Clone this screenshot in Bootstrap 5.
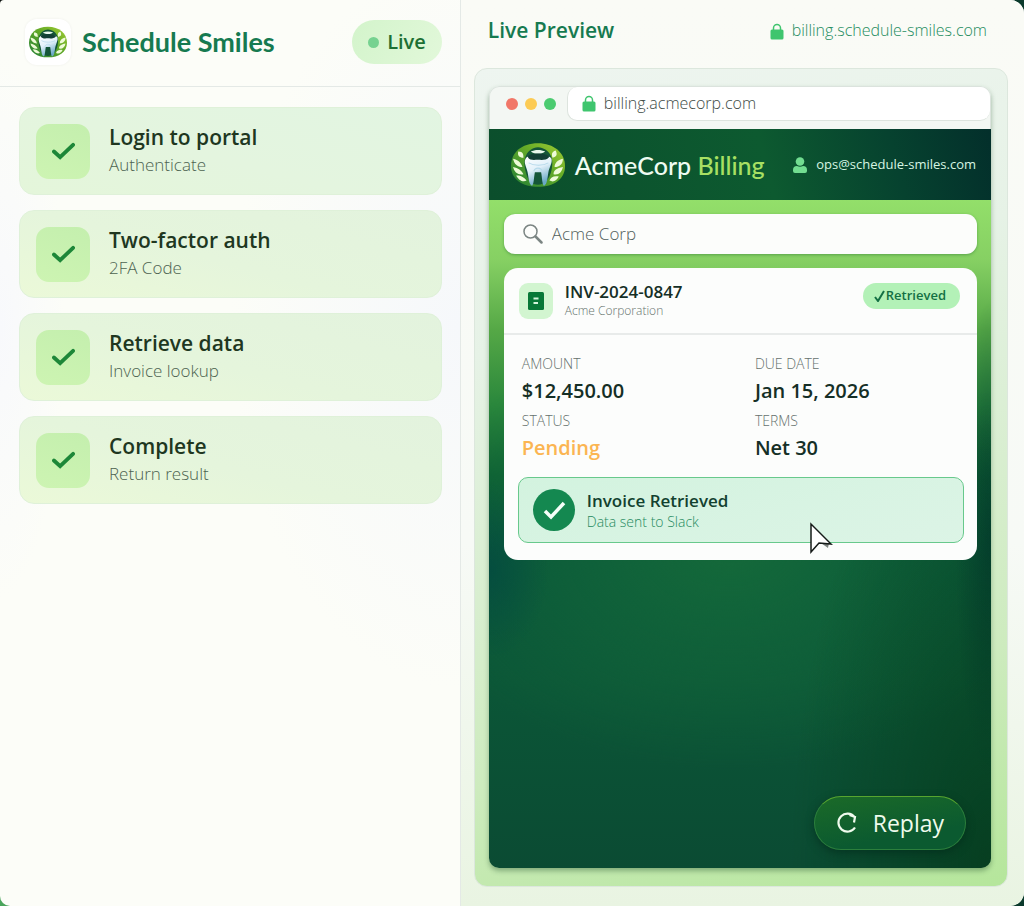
<!DOCTYPE html>
<html lang="en">
<head>
<meta charset="utf-8">
<meta name="viewport" content="width=device-width, initial-scale=1">
<title>Schedule Smiles</title>
<link href="https://cdn.jsdelivr.net/npm/bootstrap@5.3.0/dist/css/bootstrap.min.css" rel="stylesheet">
<style>
  :root { --brand: #167a50; --ink: #152f26; --line: #e4e9e6; }
  body { font-family: "Open Sans", sans-serif; color: var(--ink); line-height: 1.2;
    background: linear-gradient(90deg, #4aa55c, #0b3a2c 60%) bottom / 100% 50% no-repeat, linear-gradient(90deg, #0a0f0d, #0b3a2c) top / 100% 50% no-repeat; }
  svg { display: block; flex: none; }
  a { text-decoration: none; }
  .shell { border-radius: 4px 14px 14px 10px; overflow: hidden; background: #fcfdf8; }
  .side-pane { width: 45%; border-right: 1px solid var(--line);
    background: radial-gradient(ellipse 50% 40% at 100% 36%, #f6f8fb, #f6f8fb00), radial-gradient(ellipse 14% 30% at 0 36%, #f8f9fc, #f8f9fc00); }
  .side-head { height: 87px; border-bottom: 1px solid var(--line); padding: 0 18px 2px 25px; }
  .logo-tile { width: 46px; height: 46px; border-radius: 12px; background: #fff; box-shadow: 0 0 3px #0000000f; display: grid; place-items: center; }
  .brand-name { font-family: Lato, sans-serif; font-size: 27px; font-weight: 700; color: var(--brand); margin: 0 0 0 11px; }
  .live-pill { height: 44px; padding: 0 16px; gap: 8px; border-radius: 22px; font-size: 20px; font-weight: 600; color: #1d7034; background: linear-gradient(120deg, #d3f4cb, #e2f8da); }
  .live-dot { width: 11px; height: 11px; border-radius: 50%; background: #76d290; }
  .steps { padding: 20px 18px 20px 19px; display: grid; gap: 15px; margin: 0; }
  .step { min-height: 88px; padding: 0 16px; gap: 19px; border-radius: 15px; border: 1px solid #dff1d9; background: linear-gradient(15deg, #ebf9d8, #e5f5dc 45%, #e3f3de); }
  .step:first-child { background: linear-gradient(15deg, #e4f6da, #e4f5df 45%, #e2f5e2); }
  .tick { width: 54px; height: 55px; border-radius: 13px; display: grid; place-items: center; background: linear-gradient(200deg, #c4efae, #cdf4b2); }
  .step h2 { font-size: 21px; line-height: 24px; font-weight: 600; color: #20371f; margin: 0 0 4px; }
  .step p { font-size: 17px; line-height: 24px; font-weight: 300; color: #4c6350; margin: 0; }
  .main-pane { background: linear-gradient(#fafbf6, #f7faf6 60%, #e9f4e2); padding: 0 16px 19px 13px; }
  .pane-head { height: 68px; padding: 0 21px 6px 14px; }
  .pane-head h2 { font-size: 21px; font-weight: 600; color: var(--brand); margin: 0; }
  .site-link { gap: 8px; font-size: 16px; font-weight: 300; color: #248c60; }
  .stage { border: 1px solid #dce7dd; border-radius: 13px; padding: 17px 16px 18px 14px; background: linear-gradient(165deg, #eef5f0, #e6f2e6 30%, #cdebbe 75%, #b5e69b); }
  .browser { border-radius: 10px; overflow: hidden; box-shadow: 0 3px 5px #25552d66; }
  .tab-strip { height: 43px; padding-left: 16px; background: #f3f7f3; border: 1px solid #dbe3dd; border-bottom: 0; border-radius: 10px 10px 0 0; }
  .lamps { gap: 7px; padding-bottom: 9px; }
  .lamp { width: 12px; height: 12px; border-radius: 50%; }
  .address { height: 34px; gap: 8px; padding-left: 14px; margin-left: 11px; border: 1px solid #dde4de; border-width: 0 0 1px 1px; border-radius: 10px; background: #fff; }
  .bare { border: 0; outline: 0; background: transparent; padding: 0; width: 100%; min-width: 0; }
  .address .bare { font-size: 16px; font-weight: 300; color: #3e4b46; }
  .app-head { height: 71px; padding: 0 15px 0 22px; background: linear-gradient(75deg, #0b4e2c, #0d5a30 55%, #06422f 80%, #032f2b); }
  .app-name { font-family: Lato, sans-serif; font-size: 25px; font-weight: 500; color: #effcf2; margin-left: 10px; white-space: nowrap; }
  .app-name b { font-weight: inherit; color: #a8e063; }
  .ops { gap: 9px; font-size: 13px; color: #d6f5e2; }
  .app-body { padding: 14px 14px 18px 15px; gap: 14px;
    background: radial-gradient(ellipse 40% 480px at 100% 100%, #03361499, #03361400),
      radial-gradient(ellipse 36px 240px at 100% 340px, #033a2fcc, #033a2f00),
      radial-gradient(ellipse 60px 90px at 0 370px, #034a40cc, #034a4000),
      radial-gradient(ellipse 65% 220px at 48% 350px, #14693a, #14693a00),
      linear-gradient(#93df6a, #86d063 60px, #55a846 130px, #2a873c 205px, #0e6234 275px, #08553a 350px, #0b5637 480px, #0b4b33 668px); }
  .finder { height: 40px; gap: 9px; padding: 0 19px; border-radius: 11px; background: #fcfdfb; box-shadow: 0 1px 3px #2f7a3488; }
  .finder .bare { font-size: 17px; font-weight: 300; color: #52605b; }
  .invoice { border-radius: 14px; background: #fcfdfc; }
  .invoice-head { height: 67px; padding: 0 17px 0 15px; border-bottom: 2px solid #e8ebea; gap: 12px; }
  .doc-tile { width: 34px; height: 36px; border-radius: 9px; background: #d2f5d0; display: grid; place-items: center; }
  .invoice h3 { font-size: 17px; line-height: 20px; font-weight: 600; margin: 0; }
  .invoice-head p { font-size: 12px; line-height: 18px; font-weight: 300; color: #66736e; margin: 0; }
  .state { height: 26px; padding: 0 14px 0 11px; border-radius: 13px; font-size: 13px; font-weight: 600; color: #147044; background: #b3f1b7; margin-bottom: 10px; }
  .facts { display: grid; grid-template-columns: 1fr 1fr; padding: 19px 0 0 18px; margin: 0; column-gap: 11px; }
  .facts dt { font-size: 14px; line-height: 20px; font-weight: 300; color: #65716d; }
  .facts dd { font-size: 20px; line-height: 33px; font-weight: 600; margin: 0 0 4px; }
  .facts .warn { color: #fbb552; }
  .notice { margin: 9px 13px 17px 14px; height: 66px; padding: 0 14px; gap: 12px; border: 1px solid #68c98c; border-radius: 10px; background: linear-gradient(165deg, #d3f3df, #dcf4e6); position: relative; }
  .notice h3 { line-height: 22px; color: #12412f; }
  .notice p { font-size: 14px; line-height: 19px; font-weight: 300; color: #258a60; margin: 0; }
  .cursor { position: absolute; right: 130px; top: 44px; }
  .replay { height: 54px; padding: 0 21px; gap: 15px; margin-right: 11px; border-radius: 27px; border: 1px solid #2c7f3c; border-top-color: #57a52f; font-size: 23px; color: #effbed; background: linear-gradient(170deg, #1b6a28, #0b5a30 70%); box-shadow: 0 3px 8px #02251888; }
</style>
</head>
<body>
<svg width="0" height="0" class="position-absolute" aria-hidden="true">
  <defs>
    <linearGradient id="leafFill" x1="0" y1="1" x2="1" y2="0"><stop stop-color="#217e35"/><stop offset=".6" stop-color="#67ac27"/><stop offset="1" stop-color="#a6cf35"/></linearGradient>
    <linearGradient id="toothFill" x1="0" y1="0" x2=".4" y2="1"><stop stop-color="#fff"/><stop offset=".5" stop-color="#e3f1fa"/><stop offset="1" stop-color="#6aa9c7"/></linearGradient>
    <symbol id="tooth" viewBox="0 0 52 44">
      <path d="M26 1C41 1 52 10 52 23S41 43 26 43 0 36 0 23 10 1 26 1Z" fill="url(#leafFill)"/>
      <path d="M26 5C15 6 11 16 14 28c2 9 6 13 12 13s11-5 13-14c3-12-2-21-13-22Z" fill="#145638"/>
      <path d="M7 9c5 0 5 3 5 6-4 0-6-2-5-6ZM2 16c5 1 8 4 9 8-5 0-8-3-9-8ZM2 24c5 1 8 3 10 7-5 1-9-2-10-7ZM5 32c5 0 8 2 10 5-4 2-8-1-10-5ZM43 8c-4 1-4 4-3 7 4-1 5-3 3-7ZM50 16c-5 1-8 4-8 8 5 0 8-3 8-8ZM50 24c-6 1-9 3-9 7 5 1 8-2 9-7ZM46 33c-5-1-8 1-9 4 4 2 7 0 9-4Z" fill="#eefbd8"/>
      <path d="M19 9c4-2 10-2 14 0-4 3-10 3-14 0Z" fill="#e9f8ed"/>
      <path d="M14 16c2-4 7-2 12-2s11-2 13 2c1 4-2 8-3 13-1 6-1 11-4 13-2 0-2-8-3-13h-6c-1 5-1 13-3 13-3-2-3-8-4-13-1-5-4-9-2-13Z" fill="url(#toothFill)"/>
      <path d="M16 14c3-4 17-4 21 0-3 4-8 3-11 3-4 0-8 1-10-3Z" fill="#123f35"/>
      <path d="M17 20c5 3 14 3 19 0M22 28c1-4 7-4 8 0" fill="none" stroke="#b5d9ea" stroke-width="1"/>
    </symbol>
    <symbol id="lock" viewBox="0 0 14 17"><path d="M3.500 8V5a3.500 3.500 0 0 1 7 0v3" fill="none" stroke="#3fc56e" stroke-width="1.500"/><rect x=".5" y="6.500" width="13" height="10" rx="1.500" fill="#3fc56e"/></symbol>
    <symbol id="check" viewBox="0 0 24 18"><path d="M2 9.500 8.500 15.500 22 2.500" fill="none" stroke="currentColor" stroke-width="4" stroke-linecap="round" stroke-linejoin="miter"/></symbol>
  </defs>
</svg>

<div class="shell d-flex min-vh-100">
  <aside class="side-pane flex-shrink-0">
    <header class="side-head d-flex align-items-center">
      <span class="logo-tile"><svg width="38" height="34"><use href="#tooth"/></svg></span>
      <h1 class="brand-name">Schedule Smiles</h1>
      <span class="live-pill d-flex align-items-center ms-auto"><span class="live-dot"></span>Live</span>
    </header>
    <ol class="steps list-unstyled">
      <li class="step d-flex align-items-center"><span class="tick"><svg width="23" height="18" color="#1d8738"><use href="#check"/></svg></span><div><h2>Login to portal</h2><p>Authenticate</p></div></li>
      <li class="step d-flex align-items-center"><span class="tick"><svg width="23" height="18" color="#1d8738"><use href="#check"/></svg></span><div><h2>Two-factor auth</h2><p>2FA Code</p></div></li>
      <li class="step d-flex align-items-center"><span class="tick"><svg width="23" height="18" color="#1d8738"><use href="#check"/></svg></span><div><h2>Retrieve data</h2><p>Invoice lookup</p></div></li>
      <li class="step d-flex align-items-center"><span class="tick"><svg width="23" height="18" color="#1d8738"><use href="#check"/></svg></span><div><h2>Complete</h2><p>Return result</p></div></li>
    </ol>
  </aside>

  <main class="main-pane d-flex flex-column flex-grow-1">
    <header class="pane-head d-flex align-items-center justify-content-between">
      <h2>Live Preview</h2>
      <a class="site-link d-flex align-items-center" href="#"><svg width="14" height="17"><use href="#lock"/></svg>billing.schedule-smiles.com</a>
    </header>
    <section class="stage d-flex flex-column flex-grow-1">
      <div class="browser d-flex flex-column flex-grow-1">
        <div class="tab-strip d-flex">
          <div class="lamps d-flex align-items-center flex-shrink-0">
            <span class="lamp" style="background:#f17768"></span><span class="lamp" style="background:#fccb54"></span><span class="lamp" style="background:#4bcb70"></span>
          </div>
          <label class="address d-flex align-items-center flex-grow-1"><svg width="14" height="17"><use href="#lock"/></svg><input class="bare" type="text" value="billing.acmecorp.com" aria-label="Address"></label>
        </div>
        <header class="app-head d-flex align-items-center">
          <svg width="54" height="46"><use href="#tooth"/></svg>
          <span class="app-name">AcmeCorp <b>Billing</b></span>
          <a class="ops d-flex align-items-center ms-auto" href="#"><svg width="14" height="16" viewBox="0 0 14 16" fill="#72dd91"><circle cx="7" cy="4.500" r="4.300"/><path d="M0 13q0-4 4-4 3 1.500 6 0 4 0 4 4v1q0 2-2 2H2q-2 0-2-2Z"/></svg>ops@schedule-smiles.com</a>
        </header>
        <div class="app-body d-flex flex-column flex-grow-1">
          <label class="finder d-flex align-items-center"><svg width="20" height="20" viewBox="0 0 20 20" fill="none" stroke="#7b8583"><circle cx="7.500" cy="7.500" r="6.500" stroke-width="1.500"/><path d="m12.500 12.500 6 6" stroke-width="2.500" stroke-linecap="round"/></svg><input class="bare" type="text" value="Acme Corp" aria-label="Search customers"></label>
          <article class="invoice">
            <header class="invoice-head d-flex align-items-center">
              <span class="doc-tile"><svg width="16" height="18" viewBox="0 0 16 18"><rect width="16" height="18" rx="1.500" fill="#087837"/><path d="M5.500 6.500h5M5.500 11h4.500" stroke="#d5f5dc" stroke-width="2"/></svg></span>
              <div><h3>INV-2024-0847</h3><p>Acme Corporation</p></div>
              <span class="state d-flex align-items-center ms-auto"><svg width="12" height="12" viewBox="0 0 12 12" fill="none" stroke="currentColor" stroke-width="2"><path d="m1 7 3 4L10 1"/></svg>Retrieved</span>
            </header>
            <dl class="facts">
              <div><dt>AMOUNT</dt><dd>$12,450.00</dd></div>
              <div><dt>DUE DATE</dt><dd>Jan 15, 2026</dd></div>
              <div><dt>STATUS</dt><dd class="warn">Pending</dd></div>
              <div><dt>TERMS</dt><dd>Net 30</dd></div>
            </dl>
            <div class="notice d-flex align-items-center">
              <svg width="42" height="42" viewBox="0 0 42 42"><circle cx="21" cy="21" r="21" fill="#148850"/><path d="m12 22 6 6 13-14" fill="none" stroke="#f4fff8" stroke-width="3.500"/></svg>
              <div><h3>Invoice Retrieved</h3><p>Data sent to Slack</p></div>
              <svg class="cursor" width="24" height="34" viewBox="0 0 24 34"><path d="m12 21 7 5 1-5Z" fill="#27302c" opacity=".6"/><path d="M2 2v28l8-9 12 1Z" fill="#fff" stroke="#161b19" stroke-width="1.500"/></svg>
            </div>
          </article>
          <button class="replay btn d-flex align-items-center align-self-end mt-auto" type="button"><svg width="22" height="22" viewBox="0 0 22 22" fill="none" stroke="currentColor" stroke-width="2.200"><path d="M18.500 5A9 9 0 1 0 19 15.500M13.500 3l5.500 2-1 5.500"/></svg>Replay</button>
        </div>
      </div>
    </section>
  </main>
</div>
<script src="https://cdn.jsdelivr.net/npm/bootstrap@5.3.0/dist/js/bootstrap.bundle.min.js"></script>
</body>
</html>
